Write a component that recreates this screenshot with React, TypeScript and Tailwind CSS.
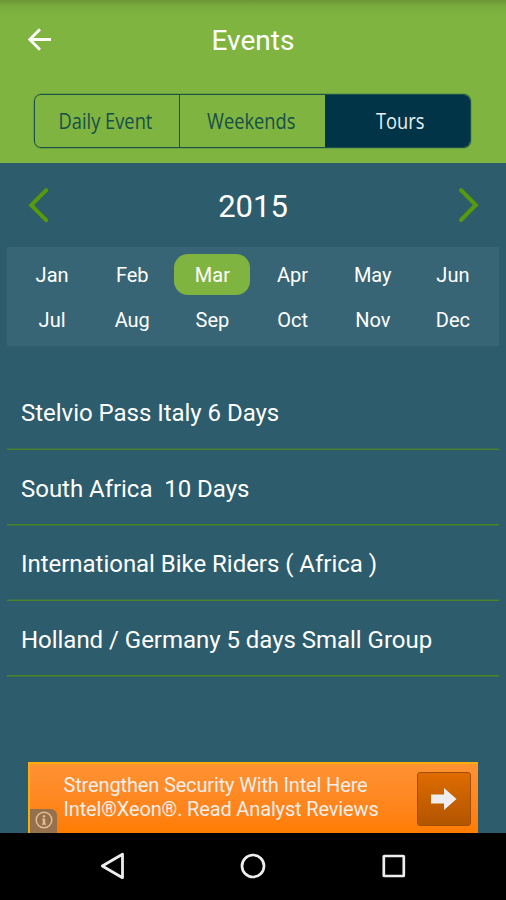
import React from 'react';
import { twMerge } from 'tailwind-merge';

const MONTHS = [
  'Jan',
  'Feb',
  'Mar',
  'Apr',
  'May',
  'Jun',
  'Jul',
  'Aug',
  'Sep',
  'Oct',
  'Nov',
  'Dec',
];

const TOURS = [
  'Stelvio Pass Italy 6 Days',
  'South Africa  10 Days',
  'International Bike Riders ( Africa )',
  'Holland / Germany 5 days Small Group',
];

const Tab = ({ className, children }: React.ComponentProps<'button'>) => {
  return (
    <button
      className={twMerge(
        "flex items-center justify-center h-full pb-px font-['Open_Sans',sans-serif] text-[22px] text-[#154f49]",
        className
      )}
    >
      <span className="block whitespace-nowrap scale-x-[0.83]">{children}</span>
    </button>
  );
};

const Header = () => {
  return (
    <header className="h-[163px] bg-[#80b440] bg-linear-to-b from-[#6b9637] via-[#7bad3e] via-[4%] to-[#80b440] to-[11%]">
      <div className="grid grid-cols-[80px_1fr_80px] items-center h-20">
        <svg className="ml-[28px] -mt-px" width="24" height="24" viewBox="0 0 24 24">
          <path
            d="M12 1.2 1.8 11.5 12 21.8M2 11.5h21"
            fill="none"
            stroke="#fff"
            strokeWidth="2.8"
          />
        </svg>
        <h1 className="pt-0.5 text-center text-[28px] text-white">Events</h1>
      </div>
      <div className="grid grid-cols-[144px_146px_1fr] h-[54px] mt-[14px] ml-[34px] w-[437px] rounded-[7px] border border-[#1c5249] shadow-[0_0_0_0.5px_#1c524966] overflow-hidden">
        <Tab className="pr-[3px]">Daily Event</Tab>
        <Tab className="pr-[3px] border-l border-[#1c5249]">Weekends</Tab>
        <Tab className="pl-1.5 bg-[#023448] text-[#e9eff2]">Tours</Tab>
      </div>
    </header>
  );
};

const YearPicker = () => {
  return (
    <div className="flex items-center justify-between h-[84px] pl-7 pr-[26px]">
      <svg width="22" height="36" viewBox="0 0 22 36">
        <path
          d="M18.2 3.2 3.2 18.2l15 15"
          fill="none"
          stroke="#579b0b"
          strokeWidth="4"
          strokeLinecap="round"
        />
      </svg>
      <span className="pt-1 pr-0.5 text-[31px] text-white">2015</span>
      <svg width="22" height="36" viewBox="0 0 22 36">
        <path
          d="M3 3.2 17.8 18 3 33"
          fill="none"
          stroke="#579b0b"
          strokeWidth="4"
          strokeLinecap="round"
        />
      </svg>
    </div>
  );
};

const MonthGrid = ({ selected }: { selected: string }) => {
  return (
    <div className="grid grid-cols-6 content-start gap-y-1 h-[99px] mx-[7px] pl-[5px] pr-[6px] pt-[7px] bg-[#386575]">
      {MONTHS.map((month) => (
        <button
          key={month}
          className={twMerge(
            'h-[41px] mx-[2px] rounded-[14px] text-[20px] text-white',
            month === selected && 'bg-[#80b440]'
          )}
        >
          {month}
        </button>
      ))}
    </div>
  );
};

const TourList = () => {
  return (
    <ul className="mx-[7px] mt-[28px]">
      {TOURS.map((tour) => (
        <li
          key={tour}
          className="flex items-center odd:h-[76px] even:h-[75px] pt-[3px] pl-[14px] border-b border-[#4a8428] odd:shadow-[inset_0_-1px_#47812e66] even:shadow-[0_1px_#47812e99] text-[24px] tracking-[-0.03px] text-white whitespace-pre"
        >
          {tour}
        </li>
      ))}
    </ul>
  );
};

const AdBanner = () => {
  return (
    <div className="relative flex justify-between w-[450px] h-[71px] mx-auto mt-auto border-t-2 border-l-2 border-[#f8ad0c] bg-linear-to-b from-[#ff9232] to-[#ff7c00] text-[#f2eeeb]">
      <p className="pl-[33.5px] pt-[9px] text-[20px] leading-6 tracking-[-0.15px] whitespace-nowrap">
        Strengthen Security With Intel Here
        <br />
        Intel®Xeon®. Read Analyst Reviews
      </p>
      <div className="flex items-center justify-center w-[54px] h-[54px] mt-2 mr-[7px] rounded-[3px] border border-[#a34e08] bg-linear-to-b from-[#df6c00] to-[#b25500]">
        <svg width="26" height="22" viewBox="0 0 26 22">
          <path d="M0 6.5h13V0l12.5 11L13 22v-6.5H0z" fill="#eee" />
        </svg>
      </div>
      <div className="absolute left-0 bottom-0 flex items-center justify-center w-[27px] h-6 rounded-tr-[6px] bg-[#94704c]">
        <svg width="18" height="18" viewBox="0 0 18 18" className="-mt-0.5">
          <circle cx="9" cy="9" r="7.8" fill="none" stroke="#e6bd92" strokeWidth="1.5" />
          <path d="M7.8 4.2h2.4v2H7.8zM7.2 7.5h3v5h.8v1.200H7v-1.200h.8V8.700h-.6z" fill="#e6bd92" />
        </svg>
      </div>
    </div>
  );
};

const NavBar = () => {
  return (
    <nav className="grid grid-cols-[225px_56px_225px] items-center justify-items-center h-[67px] pb-px bg-black">
      <svg width="26" height="28" viewBox="0 0 26 28">
        <path
          d="M2.3 14 22.5 2.3v23.4z"
          fill="none"
          stroke="#eee"
          strokeWidth="2.8"
          strokeLinejoin="round"
        />
      </svg>
      <svg width="26" height="26" viewBox="0 0 26 26">
        <circle cx="13" cy="13" r="11" fill="none" stroke="#eee" strokeWidth="2.7" />
      </svg>
      <svg width="24" height="24" viewBox="0 0 24 24">
        <rect x="1.8" y="2" width="20" height="20" rx="0.5" fill="none" stroke="#eee" strokeWidth="2.7" />
      </svg>
    </nav>
  );
};

export default function App() {
  return (
    <div className="flex flex-col w-[506px] h-[900px] overflow-hidden bg-[#2d5c6c] font-[Roboto,sans-serif]">
      <Header />
      <YearPicker />
      <MonthGrid selected="Mar" />
      <TourList />
      <AdBanner />
      <NavBar />
    </div>
  );
}
